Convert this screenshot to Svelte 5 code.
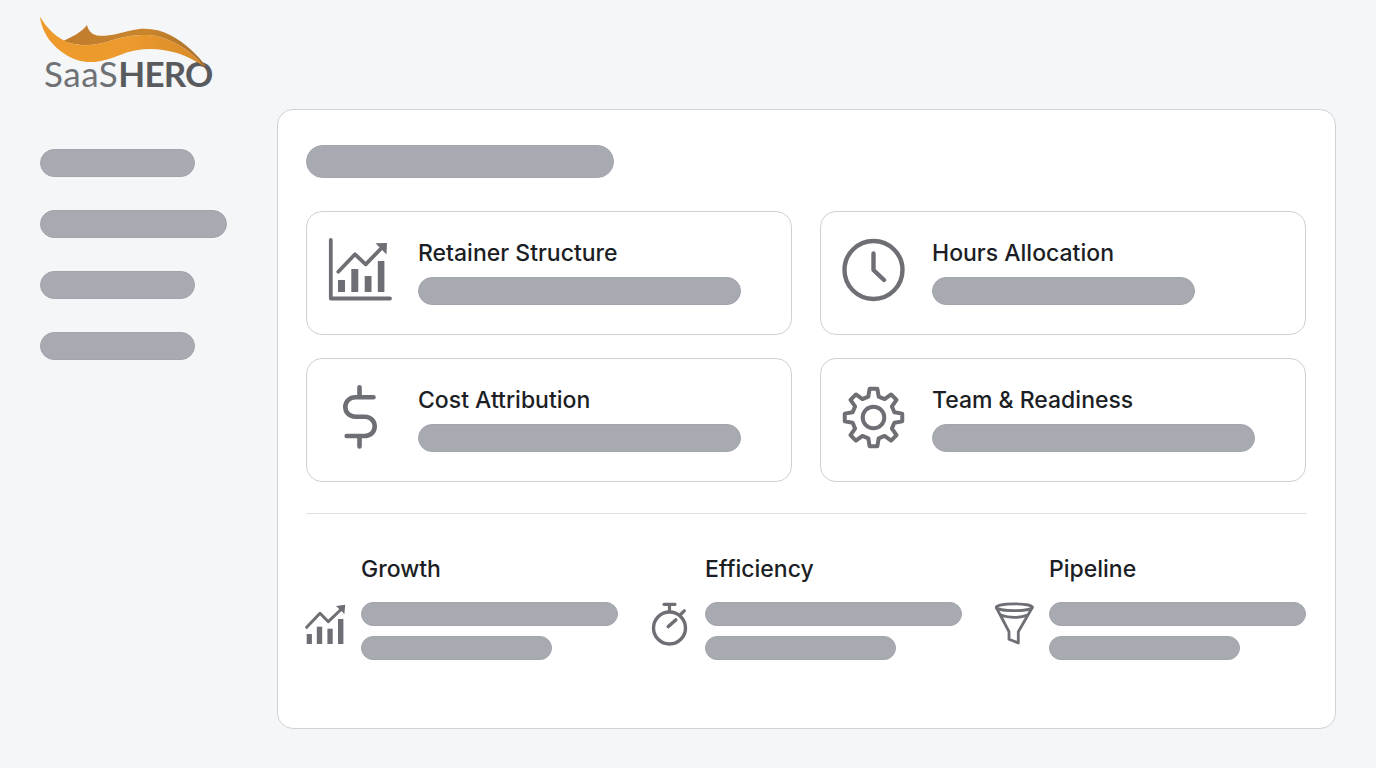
<script>
  function gearPath(cx, cy, R, r, n) {
    const pts = [];
    const step = (Math.PI * 2) / n;
    for (let i = 0; i < n; i++) {
      const a = -Math.PI / 2 + i * step;
      const at = (rad, off) => {
        const t = a + off;
        return (cx + rad * Math.cos(t)).toFixed(2) + ' ' + (cy + rad * Math.sin(t)).toFixed(2);
      };
      pts.push(at(r, -step * 0.31), at(R, -step * 0.17), at(R, step * 0.17), at(r, step * 0.31));
    }
    return 'M' + pts.join('L') + 'Z';
  }
  const gear = gearPath(873.5, 417.5, 29, 21.5, 8);
</script>

<div class="page">
  <aside>
    <div class="logo">
      <span class="wordmark"><span class="light">SaaS</span><span class="bold">HERO</span></span>
      <svg class="swoosh" viewBox="38 14 172 56" width="172" height="56" aria-hidden="true">
        <defs>
          <linearGradient id="sw" x1="0" y1="0" x2="1" y2="0">
            <stop offset="0" stop-color="#ee9a2b" />
            <stop offset="0.55" stop-color="#ec9a2e" />
            <stop offset="1" stop-color="#d68a28" />
          </linearGradient>
          <linearGradient id="sd" x1="0" y1="0" x2="1" y2="0">
            <stop offset="0" stop-color="#c07c2c" />
            <stop offset="0.6" stop-color="#c9852c" />
            <stop offset="1" stop-color="#a86f2a" />
          </linearGradient>
        </defs>
        <path d="M63 41C72 37 82 32 87 25C88 30 91 34 97 35.5C108 37 120 33 131 30.5C145 27 158 29 170 35C186 43 198 56 206 66L203 66C194 54 180 43 160 37C146 33 126 36 113 40C98 45 84 47 70 43Z" fill="url(#sd)" />
        <path d="M40 16.7C42 35 56 52 77 60C92 65 108 60 120 55C134 49 150 48 163 50C178 52 192 58 203 66C194 54 180 43 160 37C146 33 126 36 113 40C98 45 84 47 70 43C58 39 48 30 40 16.7Z" fill="url(#sw)" />
      </svg>
    </div>
    <nav>
      <div class="bar nav-s"></div>
      <div class="bar nav-l"></div>
      <div class="bar nav-s"></div>
      <div class="bar nav-s"></div>
    </nav>
  </aside>

  <main class="panel">
    <div class="bar heading"></div>

    <section class="cards">
      <article class="card">
        <svg viewBox="329 239 62 62" width="62" height="62" aria-hidden="true">
          <path d="M330.8 240V298.5H390" class="st" stroke-width="3.8" />
          <g class="fl">
            <rect x="338" y="280" width="7" height="12" />
            <rect x="351.3" y="269" width="7" height="23" />
            <rect x="364.7" y="276" width="6.8" height="16" />
            <rect x="377.8" y="261" width="6.6" height="31" />
            <path d="M375.5 243.3L387 243L386.5 254.5Z" />
          </g>
          <path d="M338.3 271.7L355 254.3L365.7 264.3L384 245.5" class="st" stroke-width="3.8" />
        </svg>
        <div class="body">
          <h3>Retainer Structure</h3>
          <div class="bar b323"></div>
        </div>
      </article>

      <article class="card">
        <svg viewBox="843 239 62 62" width="62" height="62" aria-hidden="true">
          <circle cx="873.5" cy="270" r="29" class="st" stroke-width="4.4" />
          <path d="M873.5 253.5V270L884 280" class="st" stroke-width="4.4" />
        </svg>
        <div class="body">
          <h3>Hours Allocation</h3>
          <div class="bar b263"></div>
        </div>
      </article>

      <article class="card">
        <svg viewBox="329 386 62 62" width="62" height="62" aria-hidden="true">
          <path d="M373.5 397.3H355.5C349.5 397.3 345.3 401.5 345.3 407C345.3 412.5 349.5 416.7 355.5 416.7H365C370.7 416.7 374.7 421 374.7 426.4C374.7 431.8 370.7 436 365 436H346.7M359.5 387.3V397M359.5 436V446.5" class="st" stroke-width="4.6" />
        </svg>
        <div class="body">
          <h3>Cost Attribution</h3>
          <div class="bar b323"></div>
        </div>
      </article>

      <article class="card">
        <svg viewBox="843 386 62 62" width="62" height="62" aria-hidden="true">
          <path d={gear} class="st" stroke-width="4" />
          <circle cx="873.5" cy="417.5" r="10.8" class="st" stroke-width="4" />
        </svg>
        <div class="body">
          <h3>Team &amp; Readiness</h3>
          <div class="bar b323"></div>
        </div>
      </article>
    </section>

    <hr />

    <section class="metrics">
      <div class="metric">
        <h3>Growth</h3>
        <svg viewBox="306 603 42 42" width="42" height="42" aria-hidden="true">
          <g class="fl">
            <rect x="306.7" y="634" width="5.2" height="10" />
            <rect x="316.8" y="626.7" width="5.4" height="17.3" />
            <rect x="327.4" y="628.7" width="5.3" height="15.3" />
            <rect x="338" y="619" width="5.4" height="25" />
            <path d="M336 606L345.2 604.8L344.4 614Z" />
          </g>
          <path d="M306.7 627.3L320 613.3L328.3 621.7L342 608.5" class="st" stroke-width="3" />
        </svg>
        <div class="lines">
          <div class="bar thin"></div>
          <div class="bar thin s191"></div>
        </div>
      </div>

      <div class="metric">
        <h3>Efficiency</h3>
        <svg viewBox="650 603 42 42" width="42" height="42" aria-hidden="true">
          <circle cx="669.5" cy="628" r="16" class="st" stroke-width="3.4" />
          <path d="M664 604.3H675M669.5 604.3V611M680.5 614.5L684.3 610.8" class="st" stroke-width="3.2" />
          <path d="M668.3 626.5L675.7 620" class="st" stroke-width="3.6" />
        </svg>
        <div class="lines">
          <div class="bar thin"></div>
          <div class="bar thin s191"></div>
        </div>
      </div>

      <div class="metric">
        <h3>Pipeline</h3>
        <svg viewBox="994 603 42 42" width="42" height="42" aria-hidden="true">
          <ellipse cx="1014.3" cy="607.3" rx="18" ry="3.4" class="st" stroke-width="2.8" />
          <path d="M996.3 607.5L1009 631.7V639.3L1018.3 643V631.7L1032.3 607.5M1001.8 615.3C1008 618 1021 618 1026.8 615.3" class="st" stroke-width="2.8" />
        </svg>
        <div class="lines">
          <div class="bar thin"></div>
          <div class="bar thin s191"></div>
        </div>
      </div>
    </section>
  </main>
</div>

<style>
  :global(body) {
    margin: 0;
    background: #f4f6f8;
    font-family: Inter, "Liberation Sans", sans-serif;
  }
  .page {
    display: flex;
    width: 1376px;
    height: 768px;
    box-sizing: border-box;
    overflow: hidden;
    background: #f4f6f8;
  }
  aside {
    width: 277px;
    flex: none;
    box-sizing: border-box;
    padding: 16px 0 0 40px;
  }
  .logo {
    position: relative;
    height: 133px;
  }
  .swoosh {
    position: absolute;
    left: -2px;
    top: -2px;
  }
  .wordmark {
    display: block;
    padding: 35px 0 0 4px;
    font-family: Lato, "Open Sans", sans-serif;
    font-size: 35px;
    line-height: 44px;
    white-space: nowrap;
  }
  .light {
    font-weight: 400;
    letter-spacing: 0.5px;
    color: #6f7174;
  }
  .bold {
    font-weight: 700;
    letter-spacing: -0.8px;
    color: #595a5d;
  }
  nav {
    display: flex;
    flex-direction: column;
    gap: 33px;
  }
  .bar {
    height: 28px;
    box-sizing: border-box;
    border-radius: 14px;
    background: #a8aab2;
    border: 1px solid #a3a5ad;
  }
  .nav-s { width: 155px; }
  .nav-l { width: 187px; }
  .panel {
    width: 1059px;
    height: 620px;
    margin-top: 109px;
    box-sizing: border-box;
    padding: 35px 28px 0;
    background: #fff;
    border: 1px solid #cfd3d7;
    border-radius: 16px;
  }
  .heading {
    width: 308px;
    height: 33px;
    border-radius: 17px;
  }
  .cards {
    display: grid;
    grid-template-columns: 486px 486px;
    column-gap: 28px;
    row-gap: 23px;
    margin-top: 33px;
  }
  .card {
    display: flex;
    align-items: flex-start;
    gap: 27px;
    height: 124px;
    box-sizing: border-box;
    padding: 27px 22px 0;
    border: 1px solid #cdd0d4;
    border-radius: 16px;
    background: #fff;
  }
  .card svg, .metric svg {
    display: block;
    flex: none;
    overflow: visible;
  }
  .body {
    flex: 1;
    min-width: 0;
  }
  h3 {
    margin: 0;
    font-size: 23px;
    line-height: 28px;
    font-weight: 500;
    color: #1b1e24;
    white-space: nowrap;
  }
  .body .bar {
    margin-top: 10px;
  }
  .b323 { width: 323px; }
  .b263 { width: 263px; }
  hr {
    height: 1px;
    margin: 31px 0 41px;
    border: 0;
    background: #dfe2e5;
  }
  .metrics {
    display: grid;
    grid-template-columns: repeat(3, 312px);
    column-gap: 32px;
  }
  .metric {
    display: grid;
    grid-template-columns: 55px 1fr;
    row-gap: 19px;
  }
  .metric h3 {
    grid-column: 2;
  }
  .metric svg {
    margin-top: 1px;
  }
  .lines {
    display: flex;
    flex-direction: column;
    gap: 10px;
  }
  .thin {
    height: 24px;
    border-radius: 12px;
  }
  .s191 { width: 191px; }
  .st {
    fill: none;
    stroke: #6d6f75;
    stroke-linecap: round;
    stroke-linejoin: round;
  }
  .fl {
    fill: #6d6f75;
  }
</style>
